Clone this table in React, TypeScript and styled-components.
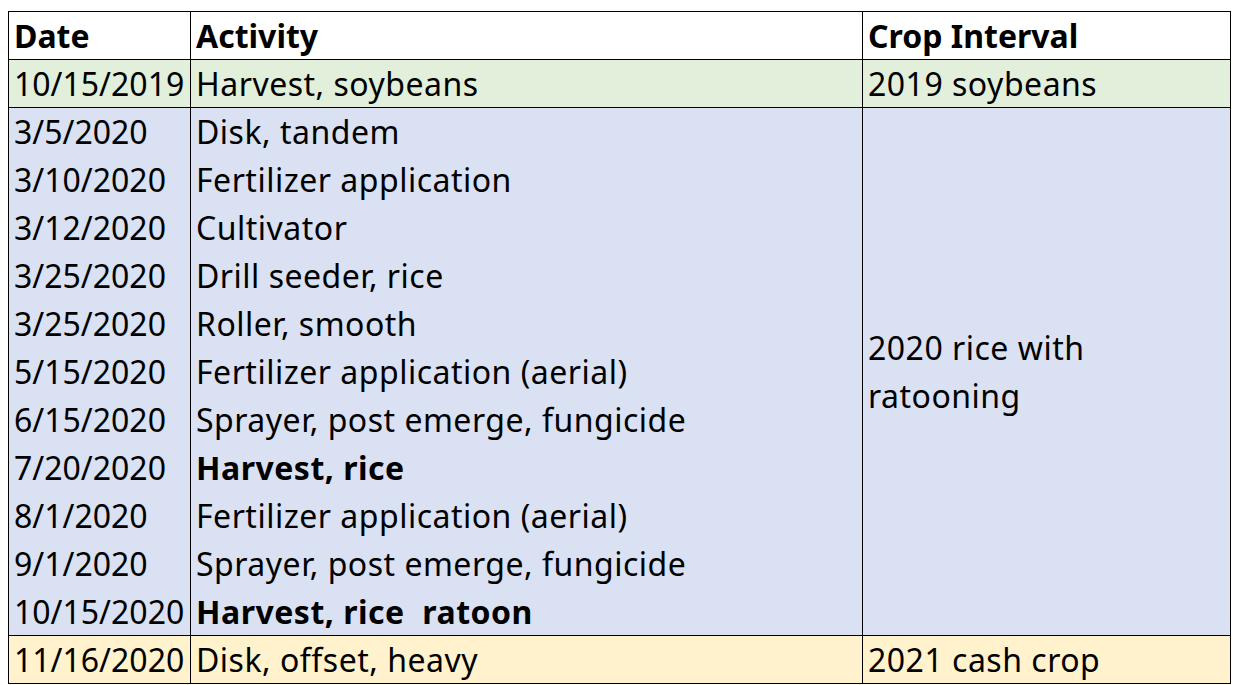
import React from "react";
import styled, { createGlobalStyle } from "styled-components";

const GlobalStyle = createGlobalStyle`
  body {
    margin: 0;
    background: #ffffff;
    font-family: "Noto Sans", "Open Sans", sans-serif;
    color: #000000;
  }
`;

const Page = styled.div`
  padding: 11px 0 0 8px;
`;

const Table = styled.table`
  border-collapse: collapse;
  table-layout: fixed;
  width: 1222px;
  font-size: 32px;
  font-variant-ligatures: none;
`;

const Col = styled.col<{ $w: number }>`
  width: ${(p) => p.$w}px;
`;

const bands = {
  head: "#ffffff",
  soy: "#e2efda",
  rice: "#d9e1f2",
  cash: "#fff2cc",
};

type Band = keyof typeof bands;

const Row = styled.tr<{ $band: Band }>`
  background: ${(p) => bands[p.$band]};
  height: 48px;
`;

const HeadCell = styled.th`
  border: 1.5px solid #000;
  text-align: left;
  font-weight: 700;
  padding: 0 5px;
  height: 47px;
  line-height: 47px;
  white-space: nowrap;
`;

const Cell = styled.td<{ $bold?: boolean; $group?: boolean; $wide?: boolean }>`
  border-left: 1.5px solid #000;
  border-right: 1.5px solid #000;
  border-top: ${(p) => (p.$group ? "none" : "1.5px solid #000")};
  border-bottom: ${(p) => (p.$group ? "none" : "1.5px solid #000")};
  padding: 0 5px;
  height: 47px;
  line-height: 47px;
  font-weight: ${(p) => (p.$bold ? 700 : 400)};
  letter-spacing: ${(p) => (p.$wide ? "0.5px" : "0")};
  white-space: nowrap;
  overflow: hidden;
  vertical-align: middle;
`;

const SpanCell = styled.td`
  border: 1.5px solid #000;
  padding: 0 5px;
  vertical-align: middle;
  line-height: 48px;
  letter-spacing: 0.5px;
`;

const riceRows: [string, string, boolean?][] = [
  ["3/5/2020", "Disk, tandem"],
  ["3/10/2020", "Fertilizer application"],
  ["3/12/2020", "Cultivator"],
  ["3/25/2020", "Drill seeder, rice"],
  ["3/25/2020", "Roller, smooth"],
  ["5/15/2020", "Fertilizer application (aerial)"],
  ["6/15/2020", "Sprayer, post emerge, fungicide"],
  ["7/20/2020", "Harvest, rice", true],
  ["8/1/2020", "Fertilizer application (aerial)"],
  ["9/1/2020", "Sprayer, post emerge, fungicide"],
  ["10/15/2020", "Harvest, rice\u00a0 ratoon", true],
];

function App() {
  return (
    <Page>
      <GlobalStyle />
      <Table>
        <colgroup>
          <Col $w={182} />
          <Col $w={672} />
          <Col $w={368} />
        </colgroup>
        <thead>
          <Row $band="head">
            <HeadCell>Date</HeadCell>
            <HeadCell>Activity</HeadCell>
            <HeadCell>Crop Interval</HeadCell>
          </Row>
        </thead>
        <tbody>
          <Row $band="soy">
            <Cell>10/15/2019</Cell>
            <Cell $wide>Harvest, soybeans</Cell>
            <Cell $wide>2019 soybeans</Cell>
          </Row>
          {riceRows.map(([date, activity, bold], i) => (
            <Row $band="rice" key={i}>
              <Cell $group>{date}</Cell>
              <Cell $group $wide $bold={bold}>
                {activity}
              </Cell>
              {i === 0 && (
                <SpanCell rowSpan={riceRows.length}>
                  2020 rice with
                  <br />
                  ratooning
                </SpanCell>
              )}
            </Row>
          ))}
          <Row $band="cash">
            <Cell>11/16/2020</Cell>
            <Cell $wide>Disk, offset, heavy</Cell>
            <Cell $wide>2021 cash crop</Cell>
          </Row>
        </tbody>
      </Table>
    </Page>
  );
}

export default App;
